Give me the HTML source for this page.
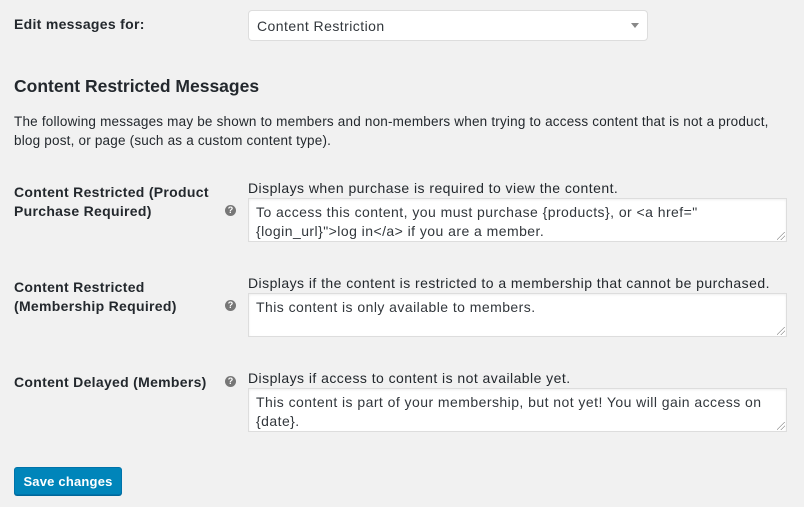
<!DOCTYPE html>
<html><head><style>
body{margin:0;width:804px;height:507px;background:#f1f1f1;font-family:"Liberation Sans",sans-serif;color:#23282d;position:relative;overflow:hidden}
.a{position:absolute;white-space:nowrap;font-size:14px;line-height:19px;letter-spacing:0.45px}
.b{font-weight:bold;letter-spacing:0.3px}
.ta{position:absolute;left:248px;width:539px;height:42px;background:#fff;border:1px solid #ddd;box-shadow:inset 0 1px 2px rgba(0,0,0,.07);box-sizing:border-box;padding:4px 7px;font-size:14px;line-height:19px;color:#32373c;white-space:nowrap;letter-spacing:0.45px}
.q{position:absolute;left:225px;width:11px;height:11px;border-radius:50%;background:#777;color:#fff;font-size:9px;font-weight:bold;line-height:11px;text-align:center}
.gr{position:absolute;right:1px;bottom:1px;width:8px;height:8px;background:linear-gradient(135deg,transparent 45%,#999 46%,#999 52%,transparent 53%,transparent 70%,#999 71%,#999 77%,transparent 78%)}
</style></head><body>
<div class="a b" style="left:14px;top:15px">Edit messages for:</div>
<div style="position:absolute;left:248px;top:10px;width:400px;height:31px;background:#fff;border:1px solid #ddd;border-radius:4px;box-sizing:border-box"></div>
<div class="a" style="left:257px;top:17px;color:#32373c">Content Restriction</div>
<div style="position:absolute;left:631px;top:23px;border-left:4px solid transparent;border-right:4px solid transparent;border-top:5px solid #888"></div>
<div class="a b" style="left:14px;top:75px;font-size:17.5px;line-height:23px;letter-spacing:0">Content Restricted Messages</div>
<div class="a" style="left:14px;top:112px;font-size:13.5px;letter-spacing:0.2px">The following messages may be shown to members and non-members when trying to access content that is not a product,<br>blog post, or page (such as a custom content type).</div>

<div class="a b" style="left:14px;top:183px">Content Restricted (Product<br>Purchase Required)</div>
<div class="q" style="top:205px">?</div>
<div class="a" style="left:248px;top:179px">Displays when purchase is required to view the content.</div>
<div class="ta" style="top:198px;height:44px">To access this content, you must purchase {products}, or &lt;a href="<br>{login_url}"&gt;log in&lt;/a&gt; if you are a member.<div class="gr"></div></div>

<div class="a b" style="left:14px;top:278px">Content Restricted<br>(Membership Required)</div>
<div class="q" style="top:300px">?</div>
<div class="a" style="left:248px;top:274px">Displays if the content is restricted to a membership that cannot be purchased.</div>
<div class="ta" style="top:293px;height:44px">This content is only available to members.<div class="gr"></div></div>

<div class="a b" style="left:14px;top:373px">Content Delayed (Members)</div>
<div class="q" style="top:376px">?</div>
<div class="a" style="left:248px;top:369px">Displays if access to content is not available yet.</div>
<div class="ta" style="top:388px;height:44px">This content is part of your membership, but not yet! You will gain access on<br>{date}.<div class="gr"></div></div>

<div style="position:absolute;left:14px;top:467px;width:108px;height:28px;background:#0085ba;border:1px solid #0073aa;border-radius:3px;box-sizing:border-box;box-shadow:0 1px 0 #006799;color:#fff;font-size:13px;font-weight:bold;line-height:27px;text-align:center;letter-spacing:0.2px">Save changes</div>
</body></html>
